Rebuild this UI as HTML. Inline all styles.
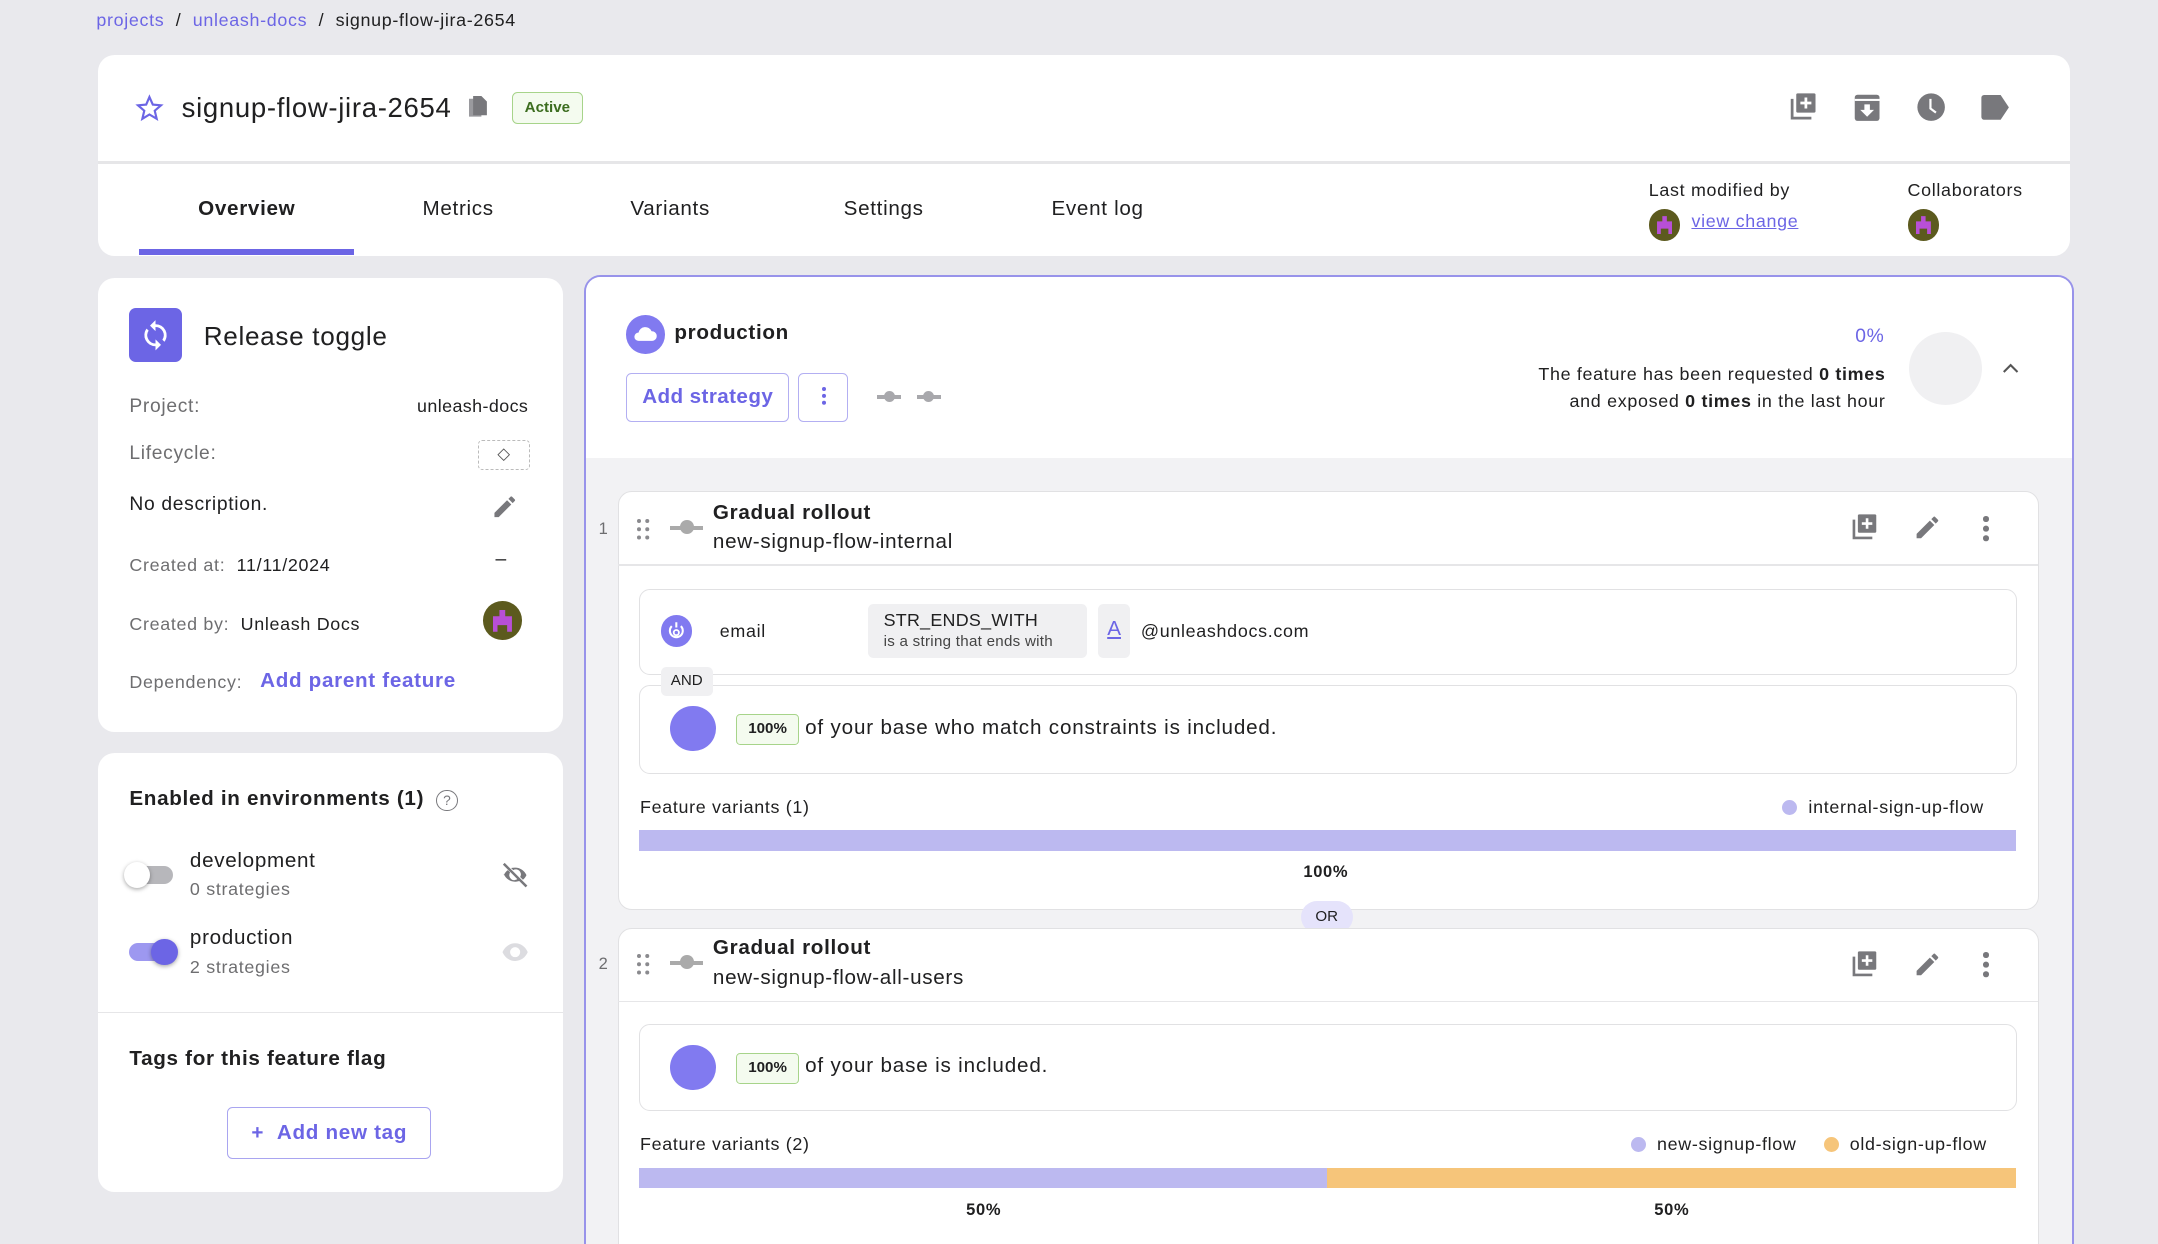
<!DOCTYPE html>
<html><head><meta charset="utf-8"><style>
html,body{margin:0;padding:0;background:#e9e9ed;overflow:hidden}
body{width:2158px;height:1244px}
#r{zoom:1.37628;width:1568px;height:904px;position:relative;font-family:"Liberation Sans",sans-serif;color:#202021;font-size:14px;letter-spacing:0.5px}
.a{position:absolute}
.card{position:absolute;background:#fff;border-radius:12px}
.lnk{color:#6c65e5}
.g{color:#6e6e70}
.b{font-weight:bold}
.ic{fill:#78787c}
.box{position:absolute;border:1px solid #e1e1e3;border-radius:8px;background:#fff}
</style></head><body><div id="r">
<div class="a" style="left:70px;top:7px;font-size:13px"><span class="lnk">projects</span> &nbsp;/&nbsp; <span class="lnk">unleash-docs</span> &nbsp;/&nbsp; signup-flow-jira-2654</div>

<div class="card" style="left:71px;top:40px;width:1433px;height:146px"></div>
<div class="a" style="left:71px;top:117px;width:1433px;height:2px;background:#e6e6e8"></div>
<svg class="a" style="left:98px;top:68px" width="21" height="21" viewBox="0 0 24 24"><path d="M12 2.5l2.8 6.3 6.8.6-5.2 4.5 1.6 6.7L12 17l-5.9 3.6 1.6-6.7-5.2-4.5 6.8-.6z" fill="none" stroke="#6c65e5" stroke-width="1.8"/></svg>
<div class="a" style="left:132px;top:67px;font-size:20px">signup-flow-jira-2654</div>
<svg class="a" style="left:341px;top:70px" width="14" height="16" viewBox="0 0 14 16"><rect x="0" y="2" width="9" height="13" fill="#9a9a9e"/><path d="M3 0h6l4 4v10H3z" fill="#78787c"/></svg>
<div class="a" style="left:372px;top:67px;width:50px;height:22px;border:1px solid #a7d48a;background:#f4fbef;border-radius:4px;color:#3c6d1f;font-size:11px;font-weight:bold;text-align:center;line-height:22px;letter-spacing:0">Active</div>
<svg class="a" style="left:1299px;top:67px" width="22" height="22" viewBox="0 0 22 22"><path d="M2 5v15h15v-2H4V5z" class="ic"/><rect x="6" y="1" width="14" height="14" rx="1" class="ic"/><path d="M12 4h2v3h3v2h-3v3h-2V9H9V7h3z" fill="#fff"/></svg>
<svg class="a" style="left:1346px;top:67px" width="22" height="22" viewBox="0 0 22 22"><rect x="2" y="2" width="18" height="19" rx="2" class="ic"/><rect x="2" y="5" width="18" height="1.5" fill="#fff"/><path d="M9 9h4v4h3l-5 5-5-5h3z" fill="#fff"/></svg>
<svg class="a" style="left:1392px;top:67px" width="22" height="22" viewBox="0 0 22 22"><circle cx="11" cy="11" r="10" class="ic"/><path d="M10.5 5v7l4 3" stroke="#fff" stroke-width="1.6" fill="none"/></svg>
<svg class="a" style="left:1439px;top:69px" width="22" height="18" viewBox="0 0 22 18"><path d="M1 2a2 2 0 0 1 2-2h12l6 9-6 9H3a2 2 0 0 1-2-2z" class="ic"/></svg>

<div class="a b" style="left:144px;top:143px;font-size:15px">Overview</div>
<div class="a" style="left:101px;top:181px;width:156px;height:4px;background:#6c65e5"></div>
<div class="a" style="left:307px;top:143px;font-size:15px">Metrics</div>
<div class="a" style="left:458px;top:143px;font-size:15px">Variants</div>
<div class="a" style="left:613px;top:143px;font-size:15px">Settings</div>
<div class="a" style="left:764px;top:143px;font-size:15px">Event log</div>
<div class="a" style="left:1198px;top:131px;font-size:13px">Last modified by</div>
<div class="a" style="left:1386px;top:131px;font-size:13px">Collaborators</div>
<div class="a" style="left:1198px;top:152px;width:23px;height:23px;border-radius:50%;background:#5c5a1e;overflow:hidden"><div class="a" style="left:6px;top:5px;width:11px;height:13px;background:#b84fd6;clip-path:polygon(35% 0,65% 0,65% 30%,100% 30%,100% 100%,75% 100%,75% 70%,25% 70%,25% 100%,0 100%,0 30%,35% 30%)"></div></div>
<div class="a lnk" style="left:1229px;top:153px;font-size:13px;text-decoration:underline">view change</div>
<div class="a" style="left:1386px;top:152px;width:23px;height:23px;border-radius:50%;background:#5c5a1e;overflow:hidden"><div class="a" style="left:6px;top:5px;width:11px;height:13px;background:#b84fd6;clip-path:polygon(35% 0,65% 0,65% 30%,100% 30%,100% 100%,75% 100%,75% 70%,25% 70%,25% 100%,0 100%,0 30%,35% 30%)"></div></div>

<!-- left card -->
<div class="card" style="left:71px;top:202px;width:338px;height:330px"></div>
<div class="a" style="left:94px;top:224px;width:38px;height:39px;border-radius:5px;background:#6c65e5"></div>
<svg class="a" style="left:101px;top:231px" width="24" height="25" viewBox="0 0 24 24"><path d="M12 4V1L8 5l4 4V6a6 6 0 0 1 5 9.3l1.5 1.5A8 8 0 0 0 12 4zM12 18a6 6 0 0 1-5-9.3L5.5 7.2A8 8 0 0 0 12 20v3l4-4-4-4z" fill="#fff"/></svg>
<div class="a" style="left:148px;top:233px;font-size:19px">Release toggle</div>
<div class="a g" style="left:94px;top:288px">Project:</div>
<div class="a" style="left:303px;top:288px;font-size:13px;letter-spacing:0.3px">unleash-docs</div>
<div class="a g" style="left:94px;top:322px">Lifecycle:</div>
<div class="a" style="left:347px;top:320px;width:37px;height:20px;border:1px dashed #bbb;border-radius:3px;text-align:center;line-height:20px;font-size:12px;color:#555">◇</div>
<div class="a" style="left:94px;top:359px">No description.</div>
<svg class="a" style="left:357px;top:358px" width="20" height="20" viewBox="0 0 24 24"><path d="M3 17.3V21h3.7l11-11-3.7-3.7zM20.7 7a1 1 0 0 0 0-1.4l-2.3-2.3a1 1 0 0 0-1.4 0l-1.8 1.8 3.7 3.7z" class="ic"/></svg>
<div class="a" style="left:94px;top:403px;font-size:13px"><span class="g">Created at:</span>&nbsp; 11/11/2024</div>
<div class="a" style="left:360px;top:399px">–</div>
<div class="a" style="left:94px;top:446px;font-size:13px"><span class="g">Created by:</span>&nbsp; Unleash Docs</div>
<div class="a" style="left:351px;top:437px;width:28px;height:28px;border-radius:50%;background:#5c5a1e;overflow:hidden"><div class="a" style="left:7px;top:6px;width:14px;height:16px;background:#b84fd6;clip-path:polygon(35% 0,65% 0,65% 30%,100% 30%,100% 100%,75% 100%,75% 70%,25% 70%,25% 100%,0 100%,0 30%,35% 30%)"></div></div>
<div class="a g" style="left:94px;top:488px;font-size:13px">Dependency:</div>
<div class="a lnk b" style="left:189px;top:486px;font-size:15px">Add parent feature</div>

<div class="card" style="left:71px;top:547px;width:338px;height:319px"></div>
<div class="a b" style="left:94px;top:572px;font-size:15px">Enabled in environments (1)</div>
<div class="a" style="left:317px;top:574px;width:14px;height:14px;border:1.3px solid #78787c;border-radius:50%;font-size:10px;text-align:center;line-height:14px;color:#78787c;letter-spacing:0">?</div>
<div class="a" style="left:94px;top:629px;width:32px;height:13px;border-radius:7px;background:#b7b7bb"></div>
<div class="a" style="left:90px;top:626px;width:19px;height:19px;border-radius:50%;background:#fff;box-shadow:0 1px 3px rgba(0,0,0,.35)"></div>
<div class="a" style="left:138px;top:617px;font-size:15px">development</div>
<div class="a g" style="left:138px;top:639px;font-size:13px">0 strategies</div>
<svg class="a" style="left:363px;top:625px" width="22" height="22" viewBox="0 0 24 24"><path d="M12 6c4 0 7.5 2.5 9 6-.6 1.4-1.6 2.7-2.8 3.7L16 13.5a4 4 0 0 0-5.5-5.5L8.8 6.3C9.8 6.1 10.9 6 12 6zM3 12c.7-1.6 1.8-3 3.2-4L8 9.8a4 4 0 0 0 6.2 5l1.7 1.7c-1.2.5-2.5.7-3.900.7-4 0-7.500-2.500-9-6z" class="ic"/><path d="M3 3l18 18" stroke="#78787c" stroke-width="2"/></svg>
<div class="a" style="left:94px;top:685px;width:32px;height:13px;border-radius:7px;background:#9d98f0"></div>
<div class="a" style="left:110px;top:682px;width:19px;height:19px;border-radius:50%;background:#6c65e5;box-shadow:0 1px 3px rgba(0,0,0,.35)"></div>
<div class="a" style="left:138px;top:673px;font-size:15px">production</div>
<div class="a g" style="left:138px;top:695px;font-size:13px">2 strategies</div>
<svg class="a" style="left:363px;top:681px" width="22" height="22" viewBox="0 0 24 24"><path d="M12 5c4.5 0 8.3 2.9 10 7-1.7 4.1-5.5 7-10 7S3.7 16.1 2 12c1.7-4.1 5.5-7 10-7zm0 3a4 4 0 1 0 0 8 4 4 0 0 0 0-8z" fill="#dcdce0"/></svg>
<div class="a" style="left:71px;top:735px;width:338px;height:1px;background:#e6e6e8"></div>
<div class="a b" style="left:94px;top:761px;font-size:15px">Tags for this feature flag</div>
<div class="a lnk b" style="left:165px;top:804px;width:147px;height:37px;border:1px solid #a9a5f0;border-radius:4px;font-size:15px;line-height:37px;text-align:center">+ &nbsp;Add new tag</div>

<!-- production env -->
<div class="a" style="left:424px;top:200px;width:1080px;height:720px;border:1.5px solid #9893ea;border-radius:12px;background:#f2f2f4;overflow:hidden">
<div class="a" style="left:0;top:0;width:1080px;height:131px;background:#fff"></div>
</div>
<div class="a" style="left:455px;top:229px;width:28px;height:28px;border-radius:50%;background:#817af0"></div>
<svg class="a" style="left:460px;top:235px" width="18" height="16" viewBox="0 0 18 16"><path d="M4 13a3 3 0 0 1 0-6 5 5 0 0 1 9.5-1A3.5 3.5 0 0 1 14 13z" fill="#fff"/></svg>
<div class="a b" style="left:490px;top:233px;font-size:15px">production</div>
<div class="a lnk b" style="left:455px;top:271px;width:117px;height:34px;border:1px solid #b3aff2;border-radius:4px;font-size:15px;line-height:34px;text-align:center;letter-spacing:0.3px">Add strategy</div>
<div class="a" style="left:580px;top:271px;width:35px;height:34px;border:1px solid #b3aff2;border-radius:4px"></div>
<div class="a" style="left:597px;top:281px;width:3px;height:3px;border-radius:50%;background:#6c65e5;box-shadow:0 5px 0 #6c65e5,0 10px 0 #6c65e5"></div>
<div class="a" style="left:637px;top:287px;width:18px;height:3px;background:#a8a8ac"></div><div class="a" style="left:642px;top:284px;width:8px;height:8px;border-radius:50%;background:#a8a8ac"></div>
<div class="a" style="left:666px;top:287px;width:18px;height:3px;background:#a8a8ac"></div><div class="a" style="left:671px;top:284px;width:8px;height:8px;border-radius:50%;background:#a8a8ac"></div>
<div class="a lnk" style="left:1348px;top:237px">0%</div>
<div class="a" style="left:1040px;top:262px;width:330px;text-align:right;font-size:13px;line-height:20px">The feature has been requested <b>0 times</b><br>and exposed <b>0 times</b> in the last hour</div>
<div class="a" style="left:1387px;top:241px;width:53px;height:53px;border-radius:50%;background:#f0f0f2"></div>
<svg class="a" style="left:1454px;top:262px" width="14" height="10" viewBox="0 0 14 10"><path d="M2 8l5-5 5 5" stroke="#555" stroke-width="1.5" fill="none"/></svg>

<!-- strategy 1 -->
<div class="a g" style="left:435px;top:378px;font-size:12px">1</div>
<div class="box" style="left:449px;top:357px;width:1031px;height:303px;border-radius:10px"></div>
<div class="a" style="left:449px;top:410px;width:1032px;height:1px;background:#e6e6e8"></div>
<div class="a" style="left:463px;top:377px;width:3px;height:3px;border-radius:50%;background:#8a8a8e;box-shadow:6px 0 0 #8a8a8e,0 6px 0 #8a8a8e,6px 6px 0 #8a8a8e,0 12px 0 #8a8a8e,6px 12px 0 #8a8a8e"></div>
<div class="a" style="left:487px;top:382px;width:24px;height:3px;background:#aaa"></div><div class="a" style="left:494px;top:378px;width:10px;height:10px;border-radius:50%;background:#aaa"></div>
<div class="a b" style="left:518px;top:364px;font-size:15px">Gradual rollout</div>
<div class="a" style="left:518px;top:385px;font-size:15px">new-signup-flow-internal</div>
<svg class="a" style="left:1344px;top:373px" width="21" height="21" viewBox="0 0 22 22"><path d="M2 5v15h15v-2H4V5z" class="ic"/><rect x="6" y="1" width="14" height="14" rx="1" class="ic"/><path d="M12 4h2v3h3v2h-3v3h-2V9H9V7h3z" fill="#fff"/></svg>
<svg class="a" style="left:1390px;top:373px" width="21" height="21" viewBox="0 0 24 24"><path d="M3 17.3V21h3.7l11-11-3.7-3.7zM20.7 7a1 1 0 0 0 0-1.4l-2.3-2.3a1 1 0 0 0-1.4 0l-1.8 1.8 3.7 3.7z" class="ic"/></svg>
<div class="a" style="left:1441px;top:375px;width:4px;height:4px;border-radius:50%;background:#78787c;box-shadow:0 7px 0 #78787c,0 14px 0 #78787c"></div>
<div class="box" style="left:464px;top:428px;width:1000px;height:61px"></div>
<div class="a" style="left:480px;top:447px;width:23px;height:23px;border-radius:50%;background:#817af0"></div>
<svg class="a" style="left:484px;top:451px" width="15" height="15" viewBox="0 0 16 16"><path d="M8 1v4M4.5 4a5 5 0 1 0 7 0" stroke="#fff" stroke-width="1.6" fill="none"/><circle cx="8" cy="9" r="2" fill="none" stroke="#fff" stroke-width="1.4"/></svg>
<div class="a" style="left:523px;top:451px;font-size:13px">email</div>
<div class="a" style="left:631px;top:439px;width:159px;height:39px;background:#f0f0f2;border-radius:4px"></div>
<div class="a" style="left:642px;top:443px;font-size:13px;letter-spacing:0.2px">STR_ENDS_WITH</div>
<div class="a" style="left:642px;top:460px;font-size:11px;color:#444;letter-spacing:0.2px">is a string that ends with</div>
<div class="a" style="left:798px;top:439px;width:23px;height:39px;background:#f0f0f2;border-radius:4px;color:#6c65e5;text-align:center;line-height:36px;font-size:15px;text-decoration:underline;letter-spacing:0">A</div>
<div class="a" style="left:829px;top:451px;font-size:13px">@unleashdocs.com</div>
<div class="box" style="left:464px;top:498px;width:1000px;height:63px"></div>
<div class="a" style="left:480px;top:485px;width:38px;height:21px;background:#f0f0f2;border-radius:4px;font-size:11px;text-align:center;line-height:21px;letter-spacing:0">AND</div>
<div class="a" style="left:487px;top:513px;width:33px;height:33px;border-radius:50%;background:#817af0"></div>
<div class="a b" style="left:535px;top:519px;width:44px;height:21px;border:1px solid #a7d48a;background:#f4fbef;border-radius:3px;font-size:11px;text-align:center;line-height:21px;letter-spacing:0">100%</div>
<div class="a" style="left:585px;top:520px;font-size:15px;letter-spacing:0.6px">of your base who match constraints is included.</div>
<div class="a" style="left:465px;top:579px;font-size:13px">Feature variants (1)</div>
<div class="a" style="left:1295px;top:581px;width:11px;height:11px;border-radius:50%;background:#bcb9f0"></div>
<div class="a" style="left:1314px;top:579px;font-size:13px">internal-sign-up-flow</div>
<div class="a" style="left:464px;top:603px;width:1001px;height:15px;background:#bcb9f0"></div>
<div class="a b" style="left:947px;top:627px;font-size:12px">100%</div>
<div class="a" style="left:945px;top:655px;width:38px;height:23px;border-radius:12px;background:#e5e3fb;font-size:11px;text-align:center;line-height:23px;letter-spacing:0">OR</div>

<!-- strategy 2 -->
<div class="a g" style="left:435px;top:694px;font-size:12px">2</div>
<div class="box" style="left:449px;top:674px;width:1031px;height:260px;border-radius:10px"></div>
<div class="a" style="left:449px;top:727px;width:1032px;height:1px;background:#e6e6e8"></div>
<div class="a" style="left:463px;top:693px;width:3px;height:3px;border-radius:50%;background:#8a8a8e;box-shadow:6px 0 0 #8a8a8e,0 6px 0 #8a8a8e,6px 6px 0 #8a8a8e,0 12px 0 #8a8a8e,6px 12px 0 #8a8a8e"></div>
<div class="a" style="left:487px;top:698px;width:24px;height:3px;background:#aaa"></div><div class="a" style="left:494px;top:694px;width:10px;height:10px;border-radius:50%;background:#aaa"></div>
<div class="a b" style="left:518px;top:680px;font-size:15px">Gradual rollout</div>
<div class="a" style="left:518px;top:702px;font-size:15px">new-signup-flow-all-users</div>
<svg class="a" style="left:1344px;top:690px" width="21" height="21" viewBox="0 0 22 22"><path d="M2 5v15h15v-2H4V5z" class="ic"/><rect x="6" y="1" width="14" height="14" rx="1" class="ic"/><path d="M12 4h2v3h3v2h-3v3h-2V9H9V7h3z" fill="#fff"/></svg>
<svg class="a" style="left:1390px;top:690px" width="21" height="21" viewBox="0 0 24 24"><path d="M3 17.3V21h3.7l11-11-3.7-3.7zM20.7 7a1 1 0 0 0 0-1.4l-2.3-2.3a1 1 0 0 0-1.4 0l-1.8 1.8 3.7 3.7z" class="ic"/></svg>
<div class="a" style="left:1441px;top:692px;width:4px;height:4px;border-radius:50%;background:#78787c;box-shadow:0 7px 0 #78787c,0 14px 0 #78787c"></div>
<div class="box" style="left:464px;top:744px;width:1000px;height:62px"></div>
<div class="a" style="left:487px;top:759px;width:33px;height:33px;border-radius:50%;background:#817af0"></div>
<div class="a b" style="left:535px;top:765px;width:44px;height:21px;border:1px solid #a7d48a;background:#f4fbef;border-radius:3px;font-size:11px;text-align:center;line-height:21px;letter-spacing:0">100%</div>
<div class="a" style="left:585px;top:766px;font-size:15px;letter-spacing:0.6px">of your base is included.</div>
<div class="a" style="left:465px;top:824px;font-size:13px">Feature variants (2)</div>
<div class="a" style="left:1185px;top:826px;width:11px;height:11px;border-radius:50%;background:#bcb9f0"></div>
<div class="a" style="left:1204px;top:824px;font-size:13px">new-signup-flow</div>
<div class="a" style="left:1325px;top:826px;width:11px;height:11px;border-radius:50%;background:#f6c57a"></div>
<div class="a" style="left:1344px;top:824px;font-size:13px">old-sign-up-flow</div>
<div class="a" style="left:464px;top:849px;width:500px;height:14px;background:#bcb9f0"></div>
<div class="a" style="left:964px;top:849px;width:501px;height:14px;background:#f6c57a"></div>
<div class="a b" style="left:702px;top:873px;font-size:12px">50%</div>
<div class="a b" style="left:1202px;top:873px;font-size:12px">50%</div>
</div></body></html>
